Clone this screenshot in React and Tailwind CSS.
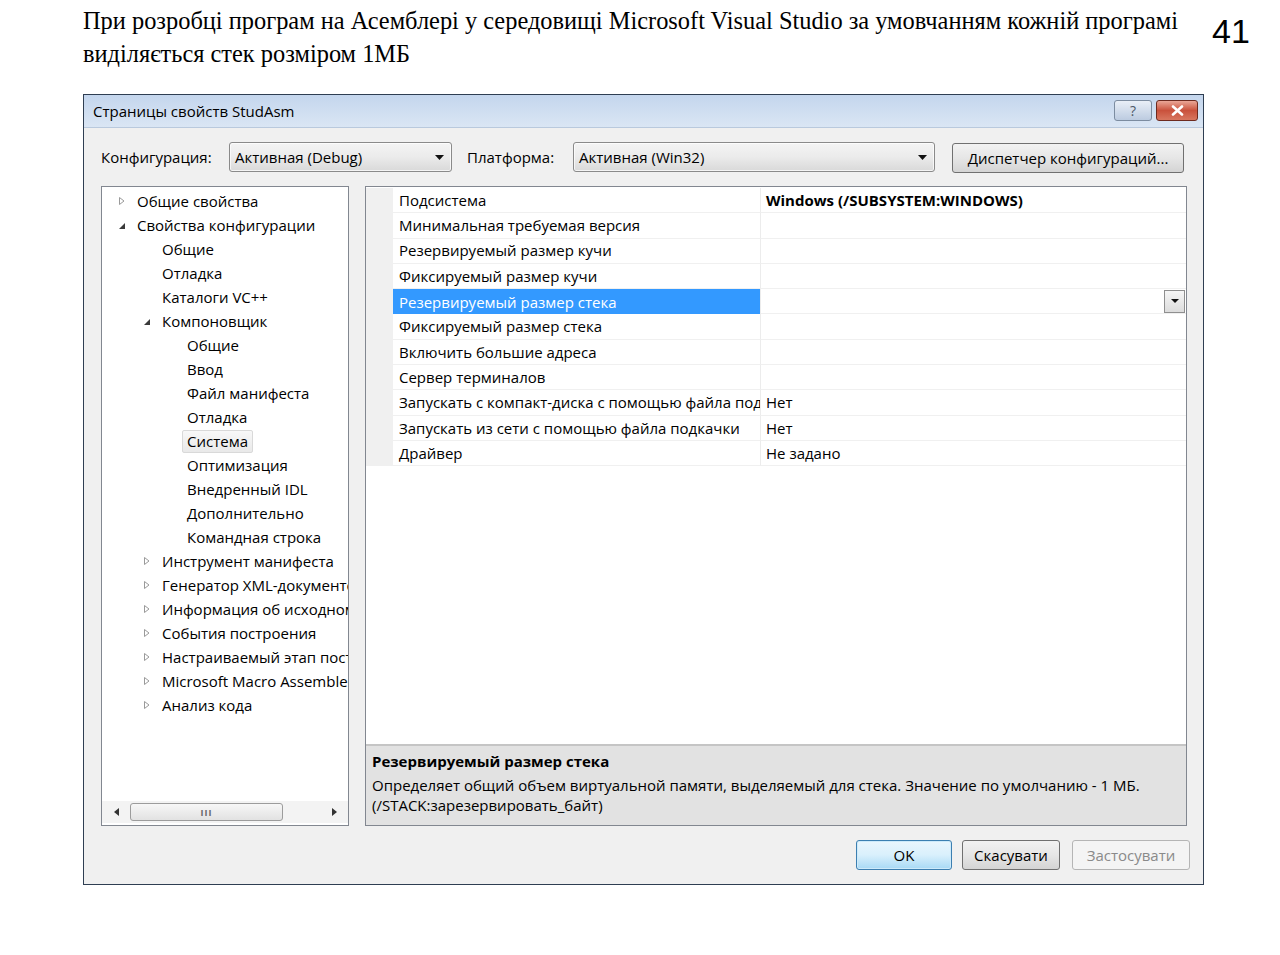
const TREE = [
  { label: 'Общие свойства', level: 0, arrow: 'closed' },
  { label: 'Свойства конфигурации', level: 0, arrow: 'open' },
  { label: 'Общие', level: 1 },
  { label: 'Отладка', level: 1 },
  { label: 'Каталоги VC++', level: 1 },
  { label: 'Компоновщик', level: 1, arrow: 'open' },
  { label: 'Общие', level: 2 },
  { label: 'Ввод', level: 2 },
  { label: 'Файл манифеста', level: 2 },
  { label: 'Отладка', level: 2 },
  { label: 'Система', level: 2, selected: true },
  { label: 'Оптимизация', level: 2 },
  { label: 'Внедренный IDL', level: 2 },
  { label: 'Дополнительно', level: 2 },
  { label: 'Командная строка', level: 2 },
  { label: 'Инструмент манифеста', level: 1, arrow: 'closed' },
  { label: 'Генератор XML-документов', level: 1, arrow: 'closed' },
  { label: 'Информация об исходном коде', level: 1, arrow: 'closed' },
  { label: 'События построения', level: 1, arrow: 'closed' },
  { label: 'Настраиваемый этап построения', level: 1, arrow: 'closed' },
  { label: 'Microsoft Macro Assembler', level: 1, arrow: 'closed' },
  { label: 'Анализ кода', level: 1, arrow: 'closed' },
];

const LEVEL_PAD = ['pl-[14px]', 'pl-[39px]', 'pl-[64px]'];

const PROPS = [
  { name: 'Подсистема', value: 'Windows (/SUBSYSTEM:WINDOWS)', bold: true },
  { name: 'Минимальная требуемая версия' },
  { name: 'Резервируемый размер кучи' },
  { name: 'Фиксируемый размер кучи' },
  { name: 'Резервируемый размер стека', selected: true },
  { name: 'Фиксируемый размер стека' },
  { name: 'Включить большие адреса' },
  { name: 'Сервер терминалов' },
  { name: 'Запускать с компакт-диска с помощью файла подкачки', value: 'Нет' },
  { name: 'Запускать из сети с помощью файла подкачки', value: 'Нет' },
  { name: 'Драйвер', value: 'Не задано' },
];

function TreeArrow({ type }) {
  if (type === 'closed') {
    return (
      <svg width="8" height="10" viewBox="0 0 8 10" className="ml-[2px]">
        <path d="M1.5 1.5 L6 5 L1.5 8.5 Z" fill="none" stroke="#9a9a9a" strokeWidth="1" />
      </svg>
    );
  }
  if (type === 'open') {
    return (
      <svg width="8" height="10" viewBox="0 0 8 10" className="ml-[2px]">
        <path d="M7 3 L7 9 L1 9 Z" fill="#3a3a3a" />
      </svg>
    );
  }
  return null;
}

function DownTriangle() {
  return (
    <svg width="9" height="5" viewBox="0 0 9 5">
      <path d="M0 0 H9 L4.5 5 Z" fill="#111" />
    </svg>
  );
}

function ComboBox({ value, width }) {
  return (
    <div
      className={`${width} flex h-[30px] shrink-0 items-center justify-between rounded-[3px] border border-[#8a8a8a] bg-gradient-to-b from-[#f4f4f4] via-[#ebebeb] to-[#d9d9d9] pl-[5px] pr-[7px] shadow-[inset_0_0_0_1px_rgba(255,255,255,0.7)]`}
    >
      <span>{value}</span>
      <DownTriangle />
    </div>
  );
}

function WinButton({ children, width, variant = 'normal' }) {
  const styles = {
    normal:
      'border-[#707070] bg-gradient-to-b from-[#f2f2f2] via-[#e6e6e6] to-[#d4d4d4] text-black',
    default:
      'border-[#3c7fb1] bg-gradient-to-b from-[#eaf6fd] via-[#d9f0fc] to-[#a7d9f5] text-black shadow-[inset_0_0_0_1px_#cdeafa]',
    disabled: 'border-[#b5b5b5] bg-[#f4f4f4] text-[#8a8a8a]',
  };
  return (
    <div
      className={`${width} ${styles[variant]} flex h-[30px] shrink-0 items-center justify-center rounded-[3px] border`}
    >
      {children}
    </div>
  );
}

export default function App() {
  return (
    <div className="h-[955px] w-[1280px] overflow-hidden bg-white">
      <div className="flex pl-[83px] pt-[4px]">
        <p className="w-[1110px] font-['Liberation_Serif',serif] text-[24.4px] leading-[33px] text-black">
          При розробці програм на Асемблері у середовищі Microsoft Visual Studio за умовчанням кожній програмі
          <br />
          виділяється стек розміром 1МБ
        </p>
        <span className="ml-[19px] mt-[7px] font-['Liberation_Sans',sans-serif] text-[34px] leading-[40px] text-black">
          41
        </span>
      </div>

      <div className="ml-[83px] mt-[24px] flex h-[791px] w-[1121px] flex-col border border-[#2f3e52] bg-[#f0f0f0] font-['Open_Sans',sans-serif] text-[15px] text-black">
        {/* title bar */}
        <div className="flex h-[33px] items-center justify-between border-b border-[#b9c9dd] bg-gradient-to-b from-[#c4d6ed] to-[#dae6f4] pl-[9px] pr-[5px]">
          <span className="text-[15px] text-black">Страницы свойств StudAsm</span>
          <div className="flex gap-[4px] self-start pt-[5px]">
            <div className="flex h-[21px] w-[38px] items-center justify-center rounded-[3px] border border-[#7c8ca0] bg-gradient-to-b from-[#e9eff7] to-[#bccbe0] text-[14px] leading-none text-[#4d5866]">
              ?
            </div>
            <div className="flex h-[21px] w-[42px] items-center justify-center rounded-[3px] border border-[#6d2a1f] bg-gradient-to-b from-[#e9a697] via-[#c9513c] to-[#d8765f]">
              <svg width="13" height="11" viewBox="0 0 13 11">
                <path d="M2 1.5 L11 9.5 M11 1.5 L2 9.5" stroke="#fff" strokeWidth="2.6" strokeLinecap="round" />
              </svg>
            </div>
          </div>
        </div>

        {/* body */}
        <div className="flex flex-1 flex-col pl-[17px] pr-[16px]">
          <div className="mt-[13px] flex items-center">
            <span className="w-[128px] shrink-0">Конфигурация:</span>
            <ComboBox value="Активная (Debug)" width="w-[223px]" />
            <span className="ml-[15px] w-[106px] shrink-0">Платформа:</span>
            <ComboBox value="Активная (Win32)" width="w-[362px]" />
            <div className="ml-[17px] mt-[2px]">
              <WinButton width="w-[232px]">Диспетчер конфигураций...</WinButton>
            </div>
          </div>

          <div className="mt-[13px] flex h-[640px] gap-[16px]">
            {/* tree */}
            <div className="flex w-[248px] shrink-0 flex-col border border-[#828790] bg-white">
              <div className="flex-1 overflow-hidden pt-[2px]">
                {TREE.map((item, i) => (
                  <div
                    key={i}
                    className={`${LEVEL_PAD[item.level]} flex h-[24px] items-center whitespace-nowrap`}
                  >
                    <span className="flex w-[21px] shrink-0 items-center">
                      <TreeArrow type={item.arrow} />
                    </span>
                    <span
                      className={`-ml-[5px] shrink-0 rounded-[2px] border px-[4px] leading-[21px] ${
                        item.selected
                          ? 'border-[#d9d9d9] bg-gradient-to-b from-[#f8f8f8] to-[#e9e9e9]'
                          : 'border-transparent'
                      }`}
                    >
                      {item.label}
                    </span>
                  </div>
                ))}
              </div>
              <div className="mb-[2px] flex h-[22px] items-center bg-[#f3f3f3] px-[1px]">
                <div className="flex w-[27px] justify-center">
                  <svg width="5" height="8" viewBox="0 0 5 8">
                    <path d="M5 0 V8 L0 4 Z" fill="#333" />
                  </svg>
                </div>
                <div className="flex h-[18px] w-[153px] items-center justify-center rounded-[3px] border border-[#9c9c9c] bg-gradient-to-b from-[#f7f7f7] to-[#e2e2e2]">
                  <span className="text-[9px] font-bold leading-none tracking-[1px] text-[#666]">III</span>
                </div>
                <div className="flex-1" />
                <div className="flex w-[25px] justify-center">
                  <svg width="5" height="8" viewBox="0 0 5 8">
                    <path d="M0 0 V8 L5 4 Z" fill="#333" />
                  </svg>
                </div>
              </div>
            </div>

            {/* property grid */}
            <div className="flex min-w-0 flex-1 flex-col border border-[#828790] bg-white">
              <div className="flex-1 pt-[1px]">
                {PROPS.map((p, i) => (
                  <div key={i} className="flex h-[25.3px]">
                    <div className="w-[27px] shrink-0 bg-[#f0f0f0]" />
                    <div
                      className={`flex w-[368px] shrink-0 items-center overflow-hidden whitespace-nowrap border-r border-[#ececec] pl-[6px] ${
                        p.selected ? 'bg-[#3399ff] text-white' : 'border-b border-b-[#f0f0f0]'
                      }`}
                    >
                      {p.name}
                    </div>
                    <div className="flex min-w-0 flex-1 items-center justify-between border-b border-[#f0f0f0] pl-[5px] pr-[1px]">
                      <span className={p.bold ? 'font-bold' : ''}>{p.value}</span>
                      {p.selected && (
                        <div className="flex h-[23px] w-[21px] items-center justify-center border border-[#8f8f8f] bg-gradient-to-b from-[#f6f6f6] to-[#dcdcdc]">
                          <svg width="8" height="4" viewBox="0 0 8 4">
                            <path d="M0 0 H8 L4 4 Z" fill="#111" />
                          </svg>
                        </div>
                      )}
                    </div>
                  </div>
                ))}
              </div>
              <div className="h-[81px] border-t-2 border-[#c5c5c5] bg-[#e2e2e2] px-[6px] pt-[5px] leading-[20px]">
                <div className="font-bold">Резервируемый размер стека</div>
                <div className="mt-[4px]">
                  Определяет общий объем виртуальной памяти, выделяемый для стека. Значение по умолчанию - 1 МБ.
                </div>
                <div>(/STACK:зарезервировать_байт)</div>
              </div>
            </div>
          </div>

          <div className="mr-[-3px] mt-[14px] flex justify-end">
            <WinButton width="w-[96px]" variant="default">
              OK
            </WinButton>
            <div className="ml-[10px]">
              <WinButton width="w-[98px]">Скасувати</WinButton>
            </div>
            <div className="ml-[12px]">
              <WinButton width="w-[118px]" variant="disabled">
                Застосувати
              </WinButton>
            </div>
          </div>
        </div>
      </div>
    </div>
  );
}
